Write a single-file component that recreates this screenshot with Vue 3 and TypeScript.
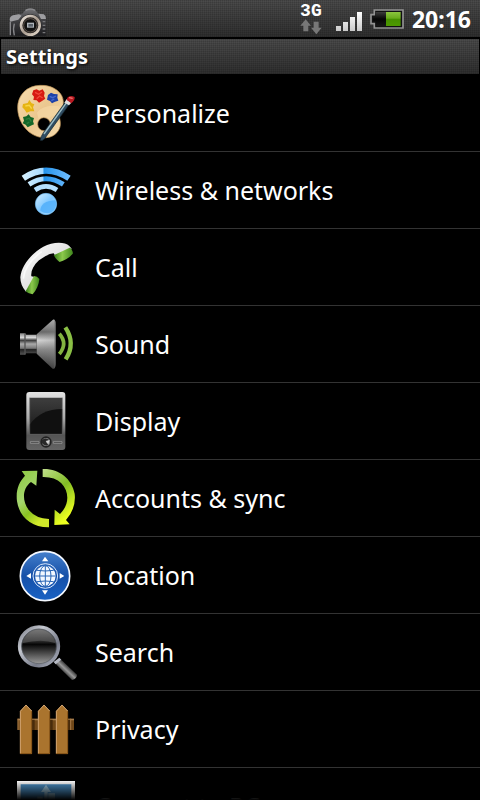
<script setup lang="ts">
interface Item {
  id: string
  label: string
}

const items: Item[] = [
  { id: 'personalize', label: 'Personalize' },
  { id: 'wireless', label: 'Wireless & networks' },
  { id: 'call', label: 'Call' },
  { id: 'sound', label: 'Sound' },
  { id: 'display', label: 'Display' },
  { id: 'accounts', label: 'Accounts & sync' },
  { id: 'location', label: 'Location' },
  { id: 'search', label: 'Search' },
  { id: 'privacy', label: 'Privacy' },
  { id: 'connect', label: 'Connect to PC' },
]
</script>

<template>
  <div class="screen">
    <header class="status">
      <svg class="camera" viewBox="0 0 120 90" aria-hidden="true">
        <defs>
          <linearGradient id="cam-body" x1="0" y1="0" x2="0" y2="1">
            <stop offset="0" stop-color="#77777a" />
            <stop offset=".35" stop-color="#454548" />
            <stop offset="1" stop-color="#1d1d20" />
          </linearGradient>
          <linearGradient id="cam-ring" x1="0" y1="0" x2="1" y2="1">
            <stop offset="0" stop-color="#eee7df" />
            <stop offset=".5" stop-color="#a89b8f" />
            <stop offset="1" stop-color="#e8ddd0" />
          </linearGradient>
        </defs>
        <path d="M2 86 1 38Q2 28 12 25L40 20 50 8Q64 1 78 8L88 20 104 22Q111 26 111 38V86Z" fill="url(#cam-body)" />
        <path d="M2 38Q3 28 12 25L30 22 38 26 28 38 4 44ZM88 20 104 22Q111 26 111 36L96 36Z" fill="#9d9da0" />
        <path d="M50 10Q64 3 78 10" stroke="#8a8a8d" stroke-width="4" fill="none" />
        <path d="M4 44V85M16 50Q11 66 16 85" stroke="#858588" stroke-width="4" fill="none" />
        <path d="M101 44H109M101 55H109M101 66H109M101 77H109" stroke="#77777a" stroke-width="4" />
        <circle cx="64" cy="55" r="33" fill="#242323" />
        <circle cx="64" cy="55" r="28" fill="#262321" stroke="url(#cam-ring)" stroke-width="8" />
        <circle cx="64" cy="55" r="20" fill="#111" stroke="#5c5149" stroke-width="3" />
        <path d="M54 47H75V62H54Z" fill="#aeb4ba" />
        <path d="M58 51H72V59H58Z" fill="#596068" />
      </svg>
      <div class="network">
        <span class="tech">3G</span>
        <svg class="arrows" viewBox="0 0 66 48" aria-hidden="true">
          <path d="M17 1 33 20H25V37H10V20H1ZM41 8H56V26H65L49 46 33 26H41Z" fill="#777" />
        </svg>
      </div>
      <svg class="signal" viewBox="0 0 78 60" aria-hidden="true">
        <defs>
          <linearGradient id="bars" x1="0" y1="0" x2="0" y2="1">
            <stop offset="0" stop-color="#fff" />
            <stop offset="1" stop-color="#c9c9c9" />
          </linearGradient>
        </defs>
        <path d="M0 45H15V60H0ZM21 33H36V60H21ZM42 18H57V60H42ZM63 3H78V60H63Z" fill="url(#bars)" />
      </svg>
      <svg class="battery" viewBox="0 0 102 60" aria-hidden="true">
        <defs>
          <linearGradient id="charge" x1="0" y1="0" x2="0" y2="1">
            <stop offset="0" stop-color="#8bc53e" />
            <stop offset=".45" stop-color="#69ab1b" />
            <stop offset=".5" stop-color="#469000" />
            <stop offset="1" stop-color="#4d9900" />
          </linearGradient>
          <linearGradient id="empty" x1="0" y1="0" x2="0" y2="1">
            <stop offset="0" stop-color="#3c3c3c" />
            <stop offset=".5" stop-color="#050505" />
            <stop offset="1" stop-color="#161616" />
          </linearGradient>
        </defs>
        <path d="M13 3H99V57H13V44H3V17H13Z" fill="#111" stroke="#929292" stroke-width="5" />
        <path d="M17 9H48V51H17V37H9V23H17Z" fill="url(#empty)" />
        <path d="M48 9H92V51H48Z" fill="url(#charge)" />
      </svg>
      <time class="clock">20:16</time>
    </header>

    <h1 class="title">Settings</h1>

    <ul class="list">
      <li v-for="item in items" :key="item.id">
        <button class="row" type="button">
          <svg v-if="item.id === 'personalize'" class="icon" viewBox="0 -3 285 228" aria-hidden="true">
            <defs>
              <linearGradient id="wood" x1="0" y1="0" x2="1" y2="1">
                <stop offset="0" stop-color="#f8deb0" />
                <stop offset=".5" stop-color="#ebc78f" />
                <stop offset="1" stop-color="#f7ddb0" />
              </linearGradient>
            </defs>
            <path fill-rule="evenodd" d="M120 28C160 26 190 50 190 78C191 98 180 105 177 120C184 142 184 160 164 176C147 190 116 187 96 174C70 158 54 128 53 98C52 56 82 29 120 28ZM131 125A18 19 0 1 0 132 164A19 19 0 0 0 131 125Z" fill="url(#wood)" stroke="#b68c52" stroke-width="2" />
            <path d="M111 110Q133 82 183 92L168 119Q151 117 148 128 132 116 116 129Z" fill="#f5d7a4" opacity=".7" />
            <path d="M100 43 110 40 118 44 128 40 134 50 132 60 136 68 126 75 117 80 110 73 100 72 102 62 96 55Z" fill="#d71912" />
            <path d="M105 49 116 55 126 48M110 68 119 60 128 66" stroke="#f0483a" stroke-width="4" fill="none" />
            <path d="M144 57 153 50 162 54 173 55 172 65 175 74 165 77 156 82 150 75 141 71Z" fill="#1c40a8" />
            <path d="M149 61 158 65 168 60M154 74 163 69" stroke="#4468cc" stroke-width="4" fill="none" />
            <path d="M69 84 83 81 88 72 95 82 103 85 99 94 103 106 91 106 80 110 74 101 67 94Z" fill="#e6b414" />
            <path d="M76 90 88 88 95 98" stroke="#f8d548" stroke-width="4" fill="none" />
            <path d="M69 123 79 121 86 115 92 123 102 126 99 136 102 145 92 149 83 154 77 146 68 142 72 134Z" fill="#126628" />
            <path d="M77 130 88 127 94 137M80 143 88 138" stroke="#2d7d3c" stroke-width="4" fill="none" />
            <path d="M196 78 207 86 134 188Q126 196 121 193 121 183 130 170Z" fill="#2f4c62" stroke="#15252d" stroke-width="2" />
            <path d="M198 82 132 174" stroke="#9ebec6" stroke-width="4" />
            <path d="M200 69 214 80 207 88 193 80Z" fill="#ddd" />
            <path d="M202 65Q210 56 224 63 225 73 214 82L200 72Z" fill="#b81921" />
            <path d="M207 65 218 67" stroke="#f17b75" stroke-width="4" />
          </svg>

          <svg v-else-if="item.id === 'wireless'" class="icon" viewBox="0 0 285 228" aria-hidden="true">
            <defs>
              <linearGradient id="wave" x1="65" y1="0" x2="212" y2="0" gradientUnits="userSpaceOnUse">
                <stop offset="0" stop-color="#d9f2ff" />
                <stop offset=".44" stop-color="#a5d9ff" />
                <stop offset=".45" stop-color="#2392eb" />
                <stop offset="1" stop-color="#72beff" />
              </linearGradient>
              <linearGradient id="ball" x1="0" y1="0" x2="1" y2="1">
                <stop offset="0" stop-color="#d7f0ff" />
                <stop offset=".5" stop-color="#80c8ff" />
                <stop offset="1" stop-color="#b8e2ff" />
              </linearGradient>
            </defs>
            <g fill="none" stroke="url(#wave)">
              <path d="M70 79Q138 33 207 79" stroke-width="18" />
              <path d="M87 97Q138 63 190 97" stroke-width="15" />
              <path d="M105 114Q138 92 171 114" stroke="#b5e0ff" stroke-width="14" />
            </g>
            <circle cx="138" cy="156" r="32" fill="url(#ball)" stroke="#71bdf5" stroke-width="2" />
            <path d="M121 177Q121 147 166 145 174 160 160 177 143 191 121 177Z" fill="#4faefa" opacity=".8" />
          </svg>

          <svg v-else-if="item.id === 'call'" class="icon" viewBox="0 0 285 228" aria-hidden="true">
            <defs>
              <linearGradient id="handset" x1="0" y1="0" x2="1" y2="1">
                <stop offset="0" stop-color="#fff" />
                <stop offset=".6" stop-color="#dedede" />
                <stop offset="1" stop-color="#aaa" />
              </linearGradient>
              <linearGradient id="cap" x1="0" y1="0" x2="1" y2="0">
                <stop offset="0" stop-color="#347d16" />
                <stop offset=".45" stop-color="#8cc94c" />
                <stop offset="1" stop-color="#3f861d" />
              </linearGradient>
            </defs>
            <path d="M78 188Q61 170 61 145C64 112 93 73 130 53C158 38 194 37 208 51L215 59 168 84 161 73Q141 75 117 94C100 110 92 126 94 142L108 145Z" fill="url(#handset)" />
            <path d="M161 79 209 56Q216 58 219 73 205 91 179 99 171 95 161 79Z" fill="url(#cap)" />
            <path d="M102 141Q112 141 118 150 116 175 98 196 85 195 77 187Z" fill="url(#cap)" />
            <path d="M70 149Q73 106 125 68" stroke="#fff" stroke-width="5" opacity=".7" fill="none" />
          </svg>

          <svg v-else-if="item.id === 'sound'" class="icon" viewBox="0 0 285 228" aria-hidden="true">
            <defs>
              <linearGradient id="metal" x1="0" y1="0" x2="0" y2="1">
                <stop offset="0" stop-color="#bbb" />
                <stop offset=".25" stop-color="#666" />
                <stop offset=".42" stop-color="#d5d5d5" />
                <stop offset=".6" stop-color="#8c8c8c" />
                <stop offset="1" stop-color="#252525" />
              </linearGradient>
              <linearGradient id="rim" x1="0" y1="0" x2="1" y2="0">
                <stop offset="0" stop-color="#777" stop-opacity="0" />
                <stop offset=".9" stop-color="#888" stop-opacity=".3" />
                <stop offset="1" stop-color="#555" />
              </linearGradient>
              <linearGradient id="neck" x1="0" y1="0" x2="0" y2="1">
                <stop offset="0" stop-color="#888" />
                <stop offset=".2" stop-color="#d8d8d8" />
                <stop offset=".33" stop-color="#3d3d3d" />
                <stop offset=".5" stop-color="#aaa" />
                <stop offset=".7" stop-color="#777" />
                <stop offset=".76" stop-color="#222" />
                <stop offset="1" stop-color="#555" />
              </linearGradient>
            </defs>
            <path d="M60 82H75L79 86H110V142H78L74 146H60Z" fill="url(#neck)" />
            <path d="M75 82V146" stroke="#555" stroke-width="4" />
            <path d="M110 85 159 41Q166 39 167 54V174Q166 191 158 188L110 143Z" fill="url(#metal)" />
            <path d="M110 85 159 41Q166 39 167 54V174Q166 191 158 188L110 143Z" fill="url(#rim)" />
            <path d="M178 83Q204 112 178 144" fill="none" stroke="#83b340" stroke-width="11" />
            <path d="M196 64Q228 112 197 160" fill="none" stroke="#8abf45" stroke-width="13" />
          </svg>

          <svg v-else-if="item.id === 'display'" class="icon" viewBox="0 0 285 228" aria-hidden="true">
            <defs>
              <linearGradient id="case" x1="0" y1="0" x2="0" y2="1">
                <stop offset="0" stop-color="#e4e4e4" />
                <stop offset=".45" stop-color="#aaa" />
                <stop offset=".75" stop-color="#555" />
                <stop offset="1" stop-color="#646464" />
              </linearGradient>
              <linearGradient id="glass" x1="0" y1="0" x2="0" y2="1">
                <stop offset="0" stop-color="#3e3e3e" />
                <stop offset="1" stop-color="#161616" />
              </linearGradient>
            </defs>
            <rect x="79" y="27" width="117" height="174" rx="9" fill="url(#case)" />
            <path d="M89 44H187V154H89Z" fill="url(#glass)" />
            <path d="M89 125Q121 79 187 78V154H89Z" fill="#101010" />
            <path d="M89 44V154H187V44" fill="none" stroke="#777" stroke-width="2" />
            <path d="M91 176H117V181H91ZM160 176H186V181H160Z" fill="#444" stroke="#a5a5a5" stroke-width="2" />
            <circle cx="138" cy="177" r="17" fill="#222" />
            <circle cx="138" cy="177" r="12" fill="#858585" />
            <path d="M126 171Q136 162 148 171L138 177 145 186Q134 190 126 181Z" fill="#282828" />
            <path d="M137 174 149 171 145 184Z" fill="#d3d3d3" />
          </svg>

          <svg v-else-if="item.id === 'accounts'" class="icon" viewBox="0 0 285 228" aria-hidden="true">
            <defs>
              <linearGradient id="sync-left" x1="0" y1="0" x2=".5" y2="1">
                <stop offset="0" stop-color="#8bc93f" />
                <stop offset=".5" stop-color="#a5d66e" />
                <stop offset=".75" stop-color="#8ac321" />
                <stop offset="1" stop-color="#d1e92a" />
              </linearGradient>
              <linearGradient id="sync-right" x1="0" y1="0" x2=".5" y2="1">
                <stop offset="0" stop-color="#c1df8c" />
                <stop offset=".5" stop-color="#82bd25" />
                <stop offset="1" stop-color="#edff20" />
              </linearGradient>
            </defs>
            <path d="M65 33 112 32 109 77 93 66C67 85 65 123 87 151Q108 176 147 177V202C95 203 58 171 51 124C47 91 56 67 75 47Z" fill="url(#sync-left)" />
            <path d="M128 27C176 25 215 55 224 101Q229 145 198 180L209 193 163 195 164 149 180 162C208 135 209 96 184 70Q164 50 128 51Z" fill="url(#sync-right)" />
          </svg>

          <svg v-else-if="item.id === 'location'" class="icon" viewBox="0 0 285 228" aria-hidden="true">
            <defs>
              <linearGradient id="disc" x1="0" y1="0" x2="0" y2="1">
                <stop offset="0" stop-color="#4580cc" />
                <stop offset=".5" stop-color="#1650a8" />
                <stop offset="1" stop-color="#1962c4" />
              </linearGradient>
            </defs>
            <circle cx="135" cy="117" r="74" fill="url(#disc)" stroke="#f4f8ff" stroke-width="5" />
            <path d="M135 59 145 73H126ZM135 173 144 160H126ZM79 117 93 108V125ZM193 117 179 108V125Z" fill="#fff" />
            <circle cx="136" cy="117" r="37" fill="none" stroke="#d8e7fc" stroke-width="3" />
            <circle cx="136" cy="117" r="31" fill="#f2f7ff" />
            <g fill="none" stroke="#2865b5" stroke-width="3">
              <path d="M136 86V148M105 117H167M111 100Q136 104 161 100M111 134Q136 130 161 134" />
              <ellipse cx="136" cy="117" rx="17" ry="31" />
            </g>
          </svg>

          <svg v-else-if="item.id === 'search'" class="icon" viewBox="0 0 285 228" aria-hidden="true">
            <defs>
              <linearGradient id="lens" x1="0" y1="0" x2="0" y2="1">
                <stop offset="0" stop-color="#777" />
                <stop offset=".38" stop-color="#252525" />
                <stop offset=".45" stop-color="#060606" />
                <stop offset="1" stop-color="#aaa" />
              </linearGradient>
              <linearGradient id="lens-ring" x1="0" y1="0" x2="1" y2="1">
                <stop offset="0" stop-color="#777b84" />
                <stop offset=".3" stop-color="#c4c7cf" />
                <stop offset=".7" stop-color="#777b89" />
                <stop offset="1" stop-color="#b5bac7" />
              </linearGradient>
              <linearGradient id="grip" x1="0" y1="1" x2="1" y2="0">
                <stop offset=".35" stop-color="#242424" />
                <stop offset=".5" stop-color="#999" />
                <stop offset=".65" stop-color="#252525" />
              </linearGradient>
            </defs>
            <path d="M162 145 179 133 231 182Q231 193 216 198Z" fill="url(#grip)" />
            <path d="M161 144 178 131 184 137 167 151Z" fill="#b6bac5" />
            <circle cx="117" cy="97" r="58" fill="url(#lens)" stroke="url(#lens-ring)" stroke-width="11" />
            <circle cx="117" cy="97" r="52" fill="none" stroke="#555a62" stroke-width="2" />
            <path d="M67 88Q77 49 117 47 157 49 167 88 125 72 67 88Z" fill="#999" opacity=".3" />
          </svg>

          <svg v-else-if="item.id === 'privacy'" class="icon" viewBox="0 0 285 228" aria-hidden="true">
            <path d="M53 83H222V117H53Z" fill="#704819" />
            <path d="M53 83H222V88H53Z" fill="#a47c4d" />
            <path d="M54 83V117M212 83V117" stroke="#a57845" stroke-width="3" />
            <path d="M96 86H104V117H96ZM150 86H158V117H150ZM204 86H210V117H204Z" fill="#482b0b" />
            <g fill="#aa742e">
              <path d="M60 189V60L78 41 96 60V189Z" />
              <path d="M114 189V60L132 41 150 60V189Z" />
              <path d="M168 189V60L186 41 204 60V189Z" />
            </g>
            <path d="M61 188V61L78 42 95 60M115 188V61L132 42 149 60M169 188V61L186 42 203 60" fill="none" stroke="#d0a473" stroke-width="3" />
            <path d="M95 61V188H61M149 61V188H115M203 61V188H169" fill="none" stroke="#825117" stroke-width="3" />
          </svg>

          <svg v-else class="icon" viewBox="0 0 285 228" aria-hidden="true">
            <path d="M51 39H225V190H51Z" fill="#fff" />
            <path d="M62 49H214V180H62Z" fill="#4b91c7" />
            <path d="M138 50 153 72H143V130H133V72H123ZM145 76H165V100H145ZM112 86H128V104H112Z" fill="#a0cbe3" />
          </svg>
          <span class="label">{{ item.label }}</span>
        </button>
      </li>
    </ul>
    <div class="fade"></div>
  </div>
</template>

<style>
body {
  background: #000;
}
</style>

<style scoped>
.screen {
  position: relative;
  display: flex;
  flex-direction: column;
  height: 100vh;
  overflow: hidden;
  background: #000;
  color: #fff;
  font-family: "Noto Sans", "Open Sans", sans-serif;
}

.status {
  display: flex;
  flex: none;
  align-items: flex-end;
  height: 37px;
  padding: 0 9px;
  box-sizing: border-box;
  background:
    repeating-linear-gradient(90deg, rgba(0, 0, 0, 0.1) 0 1px, transparent 1px 2px),
    repeating-linear-gradient(rgba(0, 0, 0, 0.1) 0 1px, transparent 1px 2px),
    linear-gradient(#4c4c4c, #2f2f2f);
}

.camera {
  width: 40px;
  height: 30px;
  margin-right: auto;
}

.network {
  display: flex;
  flex-direction: column;
  align-items: center;
  align-self: flex-start;
  width: 24px;
  margin-right: 13px;
  padding-top: 3px;
}

.tech {
  font: bold 18px/16px "Liberation Mono", monospace;
}

.arrows {
  width: 22px;
  height: 16px;
}

.signal {
  width: 26px;
  height: 20px;
  margin: 0 8px 6px 0;
}

.battery {
  width: 34px;
  height: 20px;
  margin: 0 8px 8px 0;
}

.clock {
  font-size: 23px;
  font-weight: 700;
  line-height: 36px;
}

.title {
  flex: none;
  height: 35px;
  margin: 2px 1px 1px;
  padding-left: 5px;
  background:
    repeating-linear-gradient(90deg, rgba(0, 0, 0, 0.1) 0 1px, transparent 1px 2px),
    repeating-linear-gradient(rgba(0, 0, 0, 0.1) 0 1px, transparent 1px 2px),
    linear-gradient(#4c4c4c, #2f2f2f);
  font-size: 20px;
  font-weight: 700;
  line-height: 35px;
  text-shadow: 1px 1px 3px #000;
}

.list {
  flex: 1;
  min-height: 0;
  margin: 0;
  padding: 0;
  overflow: hidden;
  list-style: none;
}

.row {
  display: flex;
  align-items: center;
  width: 100%;
  height: 77px;
  padding: 0;
  border: 0;
  border-bottom: 1px solid #333;
  background: #000;
  color: #fff;
  font: inherit;
  font-size: 25px;
  text-align: left;
}

.icon {
  flex: none;
  width: 95px;
  height: 76px;
}

.label {
  white-space: nowrap;
}

.fade {
  position: absolute;
  right: 0;
  bottom: 0;
  left: 0;
  height: 20px;
  background: linear-gradient(transparent, #000);
  pointer-events: none;
}
</style>
